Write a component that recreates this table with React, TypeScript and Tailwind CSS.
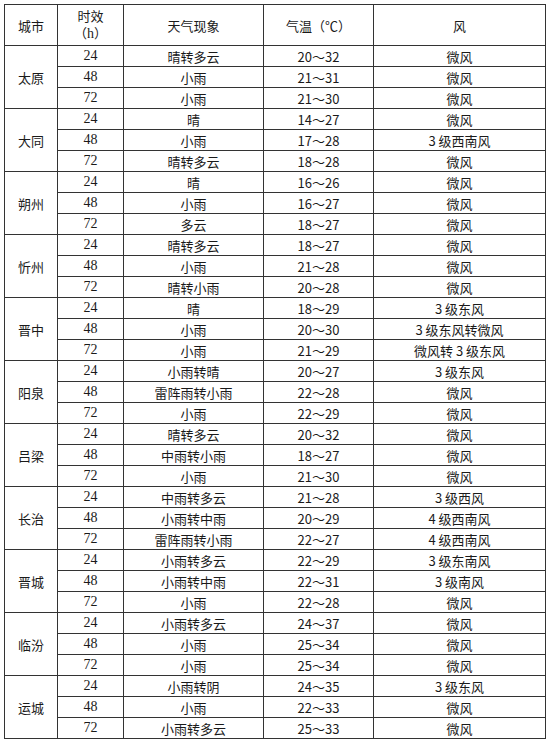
import React from "react";

type Row = [string, string, string, string];
const data: [string, Row[]][] = [
  ["太原", [["24", "晴转多云", "20～32", "微风"], ["48", "小雨", "21～31", "微风"], ["72", "小雨", "21～30", "微风"]]],
  ["大同", [["24", "晴", "14～27", "微风"], ["48", "小雨", "17～28", "3 级西南风"], ["72", "晴转多云", "18～28", "微风"]]],
  ["朔州", [["24", "晴", "16～26", "微风"], ["48", "小雨", "16～27", "微风"], ["72", "多云", "18～27", "微风"]]],
  ["忻州", [["24", "晴转多云", "18～27", "微风"], ["48", "小雨", "21～28", "微风"], ["72", "晴转小雨", "20～28", "微风"]]],
  ["晋中", [["24", "晴", "18～29", "3 级东风"], ["48", "小雨", "20～30", "3 级东风转微风"], ["72", "小雨", "21～29", "微风转 3 级东风"]]],
  ["阳泉", [["24", "小雨转晴", "20～27", "3 级东风"], ["48", "雷阵雨转小雨", "22～28", "微风"], ["72", "小雨", "22～29", "微风"]]],
  ["吕梁", [["24", "晴转多云", "20～32", "微风"], ["48", "中雨转小雨", "18～27", "微风"], ["72", "小雨", "21～30", "微风"]]],
  ["长治", [["24", "中雨转多云", "21～28", "3 级西风"], ["48", "小雨转中雨", "20～29", "4 级西南风"], ["72", "雷阵雨转小雨", "22～27", "4 级西南风"]]],
  ["晋城", [["24", "小雨转多云", "22～29", "3 级东南风"], ["48", "小雨转中雨", "22～31", "3 级南风"], ["72", "小雨", "22～28", "微风"]]],
  ["临汾", [["24", "小雨转多云", "24～37", "微风"], ["48", "小雨", "25～34", "微风"], ["72", "小雨", "25～34", "微风"]]],
  ["运城", [["24", "小雨转阴", "24～35", "3 级东风"], ["48", "小雨", "22～33", "微风"], ["72", "小雨转多云", "25～33", "微风"]]],
];

const cjk = "font-['Noto_Sans_CJK_SC',sans-serif]";
const serif = "font-['Liberation_Serif','Noto_Sans_CJK_SC',serif]";
const cell = "border border-[#333] text-center align-middle p-0 leading-none";

export default function App() {
  return (
    <div className={`h-[746px] w-[550px] bg-white pt-[4px] pl-[4px] text-[13px] text-[#1a1a1a] ${cjk}`}>
      <table className="table-fixed border-collapse w-[541px]">
        <colgroup>
          <col className="w-[53px]" />
          <col className="w-[66px]" />
          <col className="w-[140px]" />
          <col className="w-[110px]" />
          <col className="w-[172px]" />
        </colgroup>
        <thead>
          <tr className="h-[41px]">
            <th className={`${cell} font-normal`}>城市</th>
            <th className={`${cell} font-normal`}>
              <div className="flex flex-col items-center gap-[4px]">
                <span>时效</span>
                <span>
                  （<span className={`${serif} text-[14px]`}>h</span>）
                </span>
              </div>
            </th>
            <th className={`${cell} font-normal`}>天气现象</th>
            <th className={`${cell} font-normal`}>气温（℃）</th>
            <th className={`${cell} font-normal`}>风</th>
          </tr>
        </thead>
        <tbody>
          {data.map(([city, rows]) =>
            rows.map((r, i) => (
              <tr key={city + i} className="h-[21px]">
                {i === 0 && (
                  <td rowSpan={3} className={cell}>
                    {city}
                  </td>
                )}
                <td className={`${cell} ${serif} text-[14px]`}>{r[0]}</td>
                <td className={cell}>{r[1]}</td>
                <td className={cell}>{r[2]}</td>
                <td className={cell}>{r[3]}</td>
              </tr>
            ))
          )}
        </tbody>
      </table>
    </div>
  );
}
